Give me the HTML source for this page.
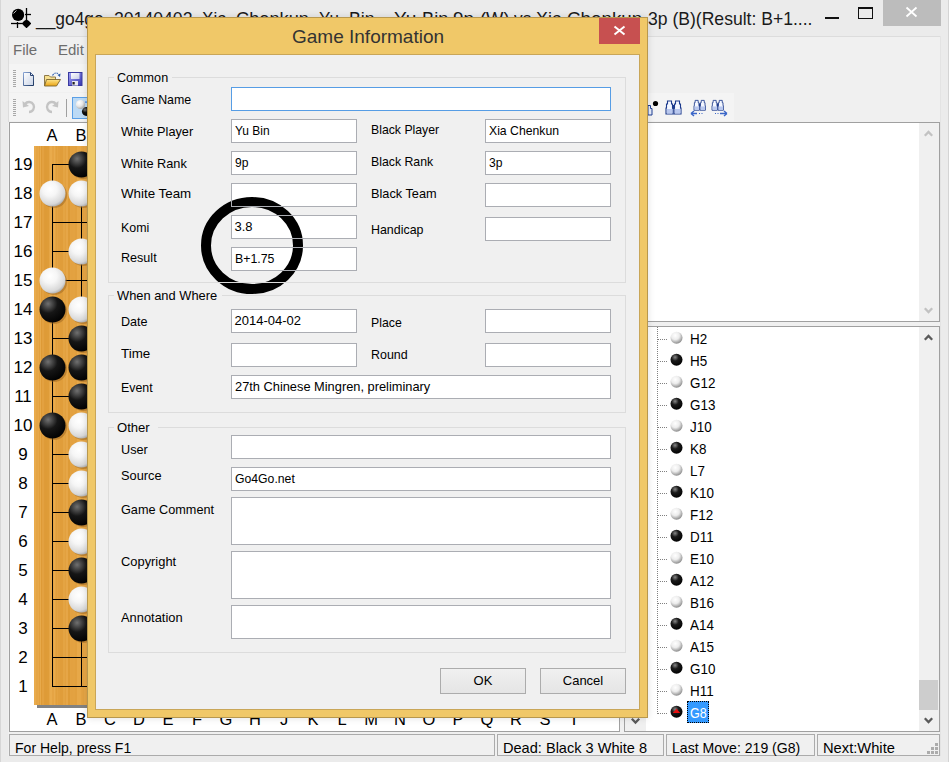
<!DOCTYPE html>
<html><head><meta charset="utf-8">
<style>
*{margin:0;padding:0;box-sizing:border-box}
html,body{width:949px;height:762px;overflow:hidden}
body{position:relative;background:#ebebeb;font-family:"Liberation Sans",sans-serif;color:#000}
.a{position:absolute}
.t{position:absolute;white-space:nowrap;line-height:1}
svg{position:absolute;overflow:visible}
</style></head><body>

<div class="a" style="left:0px;top:0px;width:1px;height:762px;background:#d6d6d6"></div>
<svg style="left:0;top:0" width="40" height="32">
<line x1="26.5" y1="8" x2="26.5" y2="28" stroke="#000" stroke-width="1.3"/>
<line x1="25" y1="14.5" x2="31" y2="14.5" stroke="#000" stroke-width="1.3"/>
<line x1="11" y1="23.5" x2="31" y2="23.5" stroke="#000" stroke-width="1.3"/>
<line x1="17.5" y1="22" x2="17.5" y2="28" stroke="#000" stroke-width="1.3"/>
<circle cx="18.1" cy="14.9" r="6.1" fill="#000"/>
<path d="M13.5 13.5 L16.5 10.5" stroke="#bbb" stroke-width="1"/>
<path d="M26.5 19.5 L29 21 L31 23.5 L29 26 L26.5 28 L24 26 L22 23.5 L24 21 Z" fill="#000"/>
</svg>
<div class="t" style="left:36.3px;top:8.92px;font-size:19px;color:#1a1a1a;transform-origin:0 0;transform:scaleX(0.9155)">__go4go_</div>
<div class="t" style="left:113.7px;top:8.92px;font-size:19px;color:#1a1a1a;transform-origin:0 0;transform:scaleX(0.9284)">20140402_</div>
<div class="t" style="left:202px;top:8.92px;font-size:19px;color:#1a1a1a;transform-origin:0 0;transform:scaleX(0.8993)">Xia_</div>
<div class="t" style="left:236.2px;top:8.92px;font-size:19px;color:#1a1a1a;transform-origin:0 0;transform:scaleX(0.9582)">Chenkun_</div>
<div class="t" style="left:319.2px;top:8.92px;font-size:19px;color:#1a1a1a;transform-origin:0 0;transform:scaleX(0.8973)">Yu_</div>
<div class="t" style="left:348.6px;top:8.92px;font-size:19px;color:#1a1a1a;transform-origin:0 0;transform:scaleX(0.9360)">Bin__</div>
<div class="t" style="left:394.1px;top:8.92px;font-size:19px;color:#1a1a1a;transform-origin:0 0;transform:scaleX(1.0078)">Yu&nbsp;</div>
<div class="t" style="left:421.8px;top:8.92px;font-size:19px;color:#1a1a1a;transform-origin:0 0;transform:scaleX(0.9588)">Bin&nbsp;</div>
<div class="t" style="left:453.2px;top:8.92px;font-size:19px;color:#1a1a1a;transform-origin:0 0;transform:scaleX(0.9954)">9p&nbsp;</div>
<div class="t" style="left:479.5px;top:8.92px;font-size:19px;color:#1a1a1a;transform-origin:0 0;transform:scaleX(0.9672)">(W)&nbsp;</div>
<div class="t" style="left:514.2px;top:8.92px;font-size:19px;color:#1a1a1a;transform-origin:0 0;transform:scaleX(0.9102)">vs&nbsp;</div>
<div class="t" style="left:536.3px;top:8.92px;font-size:19px;color:#1a1a1a;transform-origin:0 0;transform:scaleX(0.9405)">Xia&nbsp;</div>
<div class="t" style="left:567.1px;top:8.92px;font-size:19px;color:#1a1a1a;transform-origin:0 0;transform:scaleX(0.9884)">Chenkun&nbsp;</div>
<div class="t" style="left:647.5px;top:8.92px;font-size:19px;color:#1a1a1a;transform-origin:0 0;transform:scaleX(0.9245)">3p&nbsp;(B)(Result:&nbsp;B+1....</div>
<div class="a" style="left:825px;top:17px;width:14px;height:2px;background:#111"></div>
<div class="a" style="left:858px;top:7px;width:15px;height:12px;border:1px solid #111;border-top-width:2px"></div>
<div class="a" style="left:883px;top:0px;width:58px;height:26px;background:#bcbcbc"></div>
<div class="a" style="left:948px;top:0px;width:1px;height:762px;background:#d4d4d4"></div>
<svg style="left:906px;top:7px" width="11" height="10"><path d="M0.5 0.5 L10.5 9.5 M10.5 0.5 L0.5 9.5" stroke="#fff" stroke-width="1.8"/></svg>
<div class="a" style="left:8px;top:36px;width:933px;height:720px;background:#f0f0f0"></div>
<div class="a" style="left:8px;top:36px;width:933px;height:1px;background:#dcdcdc"></div>
<div class="a" style="left:8px;top:36px;width:1px;height:86px;background:#dcdcdc"></div>
<div class="a" style="left:940px;top:36px;width:1px;height:720px;background:#e3e3e3"></div>
<div class="a" style="left:9px;top:64px;width:630px;height:28px;background:#f4f4f4"></div>
<div class="a" style="left:9px;top:93px;width:725px;height:28px;background:#f4f4f4"></div>
<div class="t" style="left:13px;top:42.30px;font-size:15px;color:#6d6d6d;">File</div>
<div class="t" style="left:58px;top:42.30px;font-size:15px;color:#6d6d6d;">Edit</div>
<div class="a" style="left:13px;top:70px;width:3px;height:1px;background:#a8a8a8"></div>
<div class="a" style="left:13px;top:72px;width:3px;height:1px;background:#a8a8a8"></div>
<div class="a" style="left:13px;top:74px;width:3px;height:1px;background:#a8a8a8"></div>
<div class="a" style="left:13px;top:76px;width:3px;height:1px;background:#a8a8a8"></div>
<div class="a" style="left:13px;top:78px;width:3px;height:1px;background:#a8a8a8"></div>
<div class="a" style="left:13px;top:80px;width:3px;height:1px;background:#a8a8a8"></div>
<div class="a" style="left:13px;top:82px;width:3px;height:1px;background:#a8a8a8"></div>
<div class="a" style="left:13px;top:84px;width:3px;height:1px;background:#a8a8a8"></div>
<div class="a" style="left:13px;top:86px;width:3px;height:1px;background:#a8a8a8"></div>
<div class="a" style="left:13px;top:99px;width:3px;height:1px;background:#a8a8a8"></div>
<div class="a" style="left:13px;top:101px;width:3px;height:1px;background:#a8a8a8"></div>
<div class="a" style="left:13px;top:103px;width:3px;height:1px;background:#a8a8a8"></div>
<div class="a" style="left:13px;top:105px;width:3px;height:1px;background:#a8a8a8"></div>
<div class="a" style="left:13px;top:107px;width:3px;height:1px;background:#a8a8a8"></div>
<div class="a" style="left:13px;top:109px;width:3px;height:1px;background:#a8a8a8"></div>
<div class="a" style="left:13px;top:111px;width:3px;height:1px;background:#a8a8a8"></div>
<div class="a" style="left:13px;top:113px;width:3px;height:1px;background:#a8a8a8"></div>
<div class="a" style="left:13px;top:115px;width:3px;height:1px;background:#a8a8a8"></div>
<svg style="left:0;top:0" width="949" height="130">
<defs>
<linearGradient id="docg" x1="0" y1="0" x2="1" y2="1"><stop offset="0" stop-color="#fff"/><stop offset="1" stop-color="#c9d3e6"/></linearGradient>
<linearGradient id="foldg" x1="0" y1="0" x2="0" y2="1"><stop offset="0" stop-color="#fde48a"/><stop offset="1" stop-color="#eaa313"/></linearGradient>
<linearGradient id="flop" x1="0" y1="0" x2="1" y2="1"><stop offset="0" stop-color="#8f8ff0"/><stop offset="1" stop-color="#2f2fa8"/></linearGradient>
</defs>
<linearGradient id="docs" x1="0" y1="0" x2="1" y2="1"><stop offset="0" stop-color="#8aa6d6"/><stop offset="1" stop-color="#1b355f"/></linearGradient>
<path d="M23.5 72.5 H30.5 L33.5 75.5 V85.5 H23.5 Z" fill="url(#docg)" stroke="url(#docs)" stroke-width="1"/>
<path d="M30.5 72.5 V75.5 H33.5" fill="none" stroke="#27406e" stroke-width="1"/>
<path d="M44.5 75.5 H49 L50.5 77 H55.5 V85.5 H44.5 Z" fill="#f7e08e" stroke="#8f7a4a" stroke-width="1"/>
<path d="M46.5 79.5 H60.5 L56.5 86 H44.5 Z" fill="url(#foldg)" stroke="#7a6530" stroke-width="0.9"/>
<path d="M52.5 75.5 Q55.5 71 59 74.5" fill="none" stroke="#3060b0" stroke-width="1.1" stroke-dasharray="1.6 0.9"/>
<path d="M57.5 75 L60.5 73.5 L60 77 Z" fill="#2a5aa8"/>
<linearGradient id="flop2" x1="0" y1="0" x2="1" y2="1"><stop offset="0" stop-color="#a6a6f7"/><stop offset="1" stop-color="#3434b0"/></linearGradient>
<linearGradient id="lab" x1="0" y1="0" x2="1" y2="1"><stop offset="0" stop-color="#ffffff"/><stop offset="1" stop-color="#c8cde8"/></linearGradient>
<rect x="68.5" y="72.5" width="13.5" height="13" fill="url(#flop2)" stroke="#3a3aa0" stroke-width="1"/>
<rect x="71" y="73" width="8.5" height="6" fill="url(#lab)"/>
<rect x="72" y="81" width="6" height="4.5" fill="#e8e8f0"/>
<rect x="72.5" y="82" width="2.2" height="2.5" fill="#202020"/>
<path d="M25 104 A5 5 0 1 1 29 112" fill="none" stroke="#c4c4c4" stroke-width="2.4"/>
<path d="M22.5 101 L23 107.5 L29 106 Z" fill="#c4c4c4"/>
<path d="M56 104 A5 5 0 1 0 52 112" fill="none" stroke="#c4c4c4" stroke-width="2.4"/>
<path d="M58.5 101 L58 107.5 L52 106 Z" fill="#c4c4c4"/>
<rect x="66" y="99" width="1" height="18" fill="#a0a0a0"/>
<rect x="72.5" y="97.5" width="20" height="21" fill="#bcdaf5" stroke="#5a9fe6" stroke-width="1"/><rect x="85" y="101.5" width="3" height="1.2" fill="#3a7fe0"/>
<defs>
<radialGradient id="tgw" cx="0.35" cy="0.3" r="0.8"><stop offset="0" stop-color="#fff"/><stop offset="0.5" stop-color="#e8e8e8"/><stop offset="1" stop-color="#9a9a9a"/></radialGradient>
<radialGradient id="tgb" cx="0.35" cy="0.3" r="0.8"><stop offset="0" stop-color="#777"/><stop offset="0.4" stop-color="#111"/><stop offset="1" stop-color="#000"/></radialGradient>
</defs>
<circle cx="86.3" cy="111.5" r="4.4" fill="url(#tgb)"/>
<circle cx="80.5" cy="104.5" r="4.6" fill="url(#tgw)"/>
</svg>
<svg style="left:0;top:0" width="949" height="130"><g><path d="M648 105.5 H650.5 V108.5 H652 V115 H648 Z" fill="#e8eefc" stroke="#1f3f95" stroke-width="1"/><circle cx="655.5" cy="103.5" r="2.6" fill="#000"/></g><g transform="translate(666,100.5) scale(1.0)"><path d="M2.5 0.5 H5.5 V3.5 H6.5 V7.5 H7 V13.5 H0 V7.5 H0.5 V3.5 H1.5 V0.5 Z" fill="#f4f7ff" stroke="#1c3a8c" stroke-width="1.1"/><rect x="1" y="8.5" width="5.5" height="4.5" fill="#b9c8ef"/><path d="M10.5 0.5 H13.5 V3.5 H14.5 V7.5 H15 V13.5 H8 V7.5 H8.5 V3.5 H9.5 V0.5 Z" fill="#f4f7ff" stroke="#1c3a8c" stroke-width="1.1"/><rect x="9" y="8.5" width="5.5" height="4.5" fill="#b9c8ef"/><rect x="6.5" y="4.5" width="2" height="4" fill="#1c3a8c"/></g><g transform="translate(694,100) scale(0.76)"><path d="M2.5 0.5 H5.5 V3.5 H6.5 V7.5 H7 V13.5 H0 V7.5 H0.5 V3.5 H1.5 V0.5 Z" fill="#f4f7ff" stroke="#1c3a8c" stroke-width="1.1"/><rect x="1" y="8.5" width="5.5" height="4.5" fill="#b9c8ef"/><path d="M10.5 0.5 H13.5 V3.5 H14.5 V7.5 H15 V13.5 H8 V7.5 H8.5 V3.5 H9.5 V0.5 Z" fill="#f4f7ff" stroke="#1c3a8c" stroke-width="1.1"/><rect x="9" y="8.5" width="5.5" height="4.5" fill="#b9c8ef"/><rect x="6.5" y="4.5" width="2" height="4" fill="#1c3a8c"/></g><g transform="translate(712,100) scale(0.76)"><path d="M2.5 0.5 H5.5 V3.5 H6.5 V7.5 H7 V13.5 H0 V7.5 H0.5 V3.5 H1.5 V0.5 Z" fill="#f4f7ff" stroke="#1c3a8c" stroke-width="1.1"/><rect x="1" y="8.5" width="5.5" height="4.5" fill="#b9c8ef"/><path d="M10.5 0.5 H13.5 V3.5 H14.5 V7.5 H15 V13.5 H8 V7.5 H8.5 V3.5 H9.5 V0.5 Z" fill="#f4f7ff" stroke="#1c3a8c" stroke-width="1.1"/><rect x="9" y="8.5" width="5.5" height="4.5" fill="#b9c8ef"/><rect x="6.5" y="4.5" width="2" height="4" fill="#1c3a8c"/></g><path d="M691 113.5 H697 M691 113.5 L694 111 M691 113.5 L694 116" stroke="#3a66c8" stroke-width="1.4" fill="none"/><path d="M699 113.5 h1 M701.5 113.5 h1" stroke="#3a66c8" stroke-width="1"/><path d="M720 113.5 H727 M727 113.5 L724 111 M727 113.5 L724 116" stroke="#3a66c8" stroke-width="1.4" fill="none"/><path d="M715 113.5 h1 M717.5 113.5 h1" stroke="#3a66c8" stroke-width="1"/></svg>
<div class="a" style="left:9px;top:122px;width:611px;height:610px;background:#fff;border:1px solid #a0a0a0"></div>
<div class="a" style="left:37px;top:147px;width:558px;height:561px;background:#828282"></div>
<div class="a" style="left:34px;top:146px;width:558px;height:559px;background:linear-gradient(90deg,rgb(233,171,76) 0px 2px,rgb(229,165,69) 2px 4px,rgb(231,168,73) 4px 5px,rgb(226,160,62) 5px 6px,rgb(232,170,75) 6px 7px,rgb(222,154,54) 7px 8px,rgb(227,161,64) 8px 10px,rgb(223,155,56) 10px 11px,rgb(222,155,55) 11px 13px,rgb(223,156,56) 13px 15px,rgb(229,165,69) 15px 16px,rgb(233,171,76) 16px 18px,rgb(229,164,68) 18px 20px,rgb(233,171,77) 20px 21px,rgb(228,164,67) 21px 22px,rgb(225,159,60) 22px 23px,rgb(228,163,66) 23px 24px,rgb(225,159,61) 24px 26px,rgb(224,157,58) 26px 29px,rgb(228,164,67) 29px 31px,rgb(226,160,62) 31px 32px,rgb(230,166,71) 32px 34px,rgb(222,155,55) 34px 36px,rgb(227,162,65) 36px 37px,rgb(227,161,64) 37px 39px,rgb(227,162,65) 39px 41px,rgb(226,160,62) 41px 43px,rgb(231,168,73) 43px 44px,rgb(231,168,72) 44px 47px,rgb(228,164,67) 47px 48px,rgb(227,162,65) 48px 50px,rgb(230,167,71) 50px 52px,rgb(229,164,68) 52px 54px,rgb(223,156,56) 54px 55px,rgb(223,156,57) 55px 57px,rgb(223,156,57) 57px 59px,rgb(227,161,64) 59px 61px,rgb(222,155,55) 61px 64px,rgb(228,164,67) 64px 66px,rgb(226,160,62) 66px 68px,rgb(229,164,68) 68px 70px,rgb(231,168,73) 70px 72px,rgb(232,169,74) 72px 73px,rgb(227,162,65) 73px 75px,rgb(222,155,55) 75px 78px,rgb(230,166,70) 78px 81px,rgb(228,164,67) 81px 84px,rgb(231,168,73) 84px 87px,rgb(230,166,71) 87px 89px,rgb(226,160,62) 89px 92px,rgb(226,160,62) 92px 94px,rgb(223,156,56) 94px 96px,rgb(224,157,59) 96px 97px,rgb(223,156,57) 97px 99px,rgb(226,161,63) 99px 100px,rgb(222,155,55) 100px 102px,rgb(226,161,63) 102px 104px,rgb(232,169,75) 104px 106px,rgb(232,169,74) 106px 108px,rgb(230,166,70) 108px 110px,rgb(230,166,70) 110px 112px,rgb(233,171,76) 112px 114px,rgb(222,155,55) 114px 115px,rgb(224,158,59) 115px 116px,rgb(222,154,54) 116px 117px,rgb(224,157,58) 117px 119px,rgb(222,154,54) 119px 121px,rgb(228,163,66) 121px 123px,rgb(228,164,67) 123px 125px,rgb(230,166,70) 125px 126px,rgb(233,171,76) 126px 128px,rgb(230,166,70) 128px 131px,rgb(227,162,64) 131px 132px,rgb(231,168,73) 132px 135px,rgb(226,161,63) 135px 137px,rgb(223,155,56) 137px 139px,rgb(226,161,63) 139px 142px,rgb(222,155,55) 142px 143px,rgb(227,161,64) 143px 144px,rgb(226,160,62) 144px 145px,rgb(223,155,56) 145px 146px,rgb(223,156,57) 146px 148px,rgb(233,171,76) 148px 149px,rgb(222,154,54) 149px 151px,rgb(229,165,68) 151px 152px,rgb(229,165,69) 152px 153px,rgb(229,164,68) 153px 155px,rgb(223,156,56) 155px 157px,rgb(233,171,77) 157px 159px,rgb(227,162,65) 159px 161px,rgb(223,155,56) 161px 163px,rgb(230,167,71) 163px 164px,rgb(225,158,60) 164px 167px,rgb(223,156,57) 167px 170px,rgb(224,157,58) 170px 171px,rgb(226,160,62) 171px 173px,rgb(228,163,67) 173px 176px,rgb(231,167,72) 176px 177px,rgb(233,171,77) 177px 179px,rgb(230,166,70) 179px 180px,rgb(228,163,66) 180px 182px,rgb(226,160,62) 182px 183px,rgb(228,163,66) 183px 184px,rgb(225,159,61) 184px 186px,rgb(229,165,68) 186px 187px,rgb(231,168,73) 187px 188px,rgb(230,167,71) 188px 190px,rgb(224,157,58) 190px 191px,rgb(226,160,62) 191px 193px,rgb(233,171,77) 193px 194px,rgb(227,162,65) 194px 196px,rgb(230,166,70) 196px 197px,rgb(227,162,64) 197px 199px,rgb(233,171,77) 199px 202px,rgb(222,155,55) 202px 204px,rgb(224,158,59) 204px 205px,rgb(226,160,62) 205px 206px,rgb(229,165,68) 206px 208px,rgb(232,169,74) 208px 210px,rgb(232,170,75) 210px 212px,rgb(231,168,73) 212px 214px,rgb(232,169,74) 214px 215px,rgb(232,170,75) 215px 216px,rgb(231,167,72) 216px 219px,rgb(232,170,75) 219px 221px,rgb(231,168,72) 221px 223px,rgb(223,155,56) 223px 225px,rgb(226,161,63) 225px 228px,rgb(230,167,71) 228px 230px,rgb(230,167,71) 230px 231px,rgb(233,171,77) 231px 232px,rgb(223,156,57) 232px 233px,rgb(231,168,73) 233px 235px,rgb(229,165,68) 235px 236px,rgb(233,171,77) 236px 238px,rgb(233,170,76) 238px 241px,rgb(228,163,67) 241px 242px,rgb(222,154,54) 242px 243px,rgb(229,165,69) 243px 246px,rgb(230,167,71) 246px 248px,rgb(227,161,64) 248px 249px,rgb(231,168,73) 249px 250px,rgb(222,154,54) 250px 251px,rgb(225,159,61) 251px 252px,rgb(231,167,72) 252px 253px,rgb(225,158,60) 253px 255px,rgb(232,169,74) 255px 257px,rgb(232,170,75) 257px 258px,rgb(232,170,75) 258px 260px,rgb(229,164,68) 260px 263px,rgb(227,161,64) 263px 265px,rgb(223,156,57) 265px 267px,rgb(228,163,66) 267px 268px,rgb(232,169,74) 268px 269px,rgb(229,164,68) 269px 270px,rgb(224,157,58) 270px 271px,rgb(229,165,68) 271px 273px,rgb(228,164,67) 273px 274px,rgb(230,166,70) 274px 276px,rgb(228,163,67) 276px 278px,rgb(232,169,75) 278px 279px,rgb(224,158,59) 279px 280px,rgb(222,154,55) 280px 282px,rgb(228,163,66) 282px 283px,rgb(222,154,54) 283px 285px,rgb(227,161,64) 285px 286px,rgb(233,171,77) 286px 288px,rgb(228,163,66) 288px 290px,rgb(225,158,60) 290px 293px,rgb(228,163,66) 293px 295px,rgb(228,163,66) 295px 297px,rgb(230,166,70) 297px 298px,rgb(233,170,76) 298px 300px,rgb(232,169,74) 300px 301px,rgb(226,161,63) 301px 302px,rgb(227,161,64) 302px 304px,rgb(230,166,70) 304px 305px,rgb(222,155,55) 305px 307px,rgb(225,159,61) 307px 310px,rgb(232,170,75) 310px 311px,rgb(233,170,76) 311px 312px,rgb(229,165,69) 312px 315px,rgb(225,158,60) 315px 316px,rgb(233,171,77) 316px 317px,rgb(230,167,71) 317px 318px,rgb(226,161,63) 318px 319px,rgb(223,156,57) 319px 321px,rgb(231,168,73) 321px 324px,rgb(230,166,70) 324px 325px,rgb(226,161,63) 325px 327px,rgb(224,157,58) 327px 329px,rgb(223,155,56) 329px 331px,rgb(222,154,54) 331px 333px,rgb(227,162,65) 333px 335px,rgb(222,154,54) 335px 338px,rgb(228,163,66) 338px 340px,rgb(228,163,66) 340px 342px,rgb(223,156,56) 342px 343px,rgb(233,171,77) 343px 344px,rgb(223,155,56) 344px 345px,rgb(222,154,54) 345px 347px,rgb(225,158,60) 347px 348px,rgb(231,168,73) 348px 349px,rgb(231,168,73) 349px 352px,rgb(226,161,63) 352px 354px,rgb(233,170,76) 354px 356px,rgb(227,162,65) 356px 358px,rgb(223,155,56) 358px 360px,rgb(231,168,73) 360px 361px,rgb(227,161,64) 361px 362px,rgb(225,158,60) 362px 363px,rgb(229,165,69) 363px 364px,rgb(223,155,56) 364px 366px,rgb(222,155,55) 366px 367px,rgb(227,162,64) 367px 368px,rgb(233,171,77) 368px 370px,rgb(233,170,76) 370px 372px,rgb(229,165,68) 372px 374px,rgb(228,163,66) 374px 375px,rgb(233,170,76) 375px 376px,rgb(225,158,60) 376px 377px,rgb(224,157,58) 377px 378px,rgb(229,165,69) 378px 380px,rgb(231,167,72) 380px 382px,rgb(227,162,64) 382px 384px,rgb(224,157,58) 384px 387px,rgb(231,168,73) 387px 389px,rgb(222,154,54) 389px 391px,rgb(230,167,71) 391px 392px,rgb(233,171,77) 392px 394px,rgb(227,162,65) 394px 396px,rgb(223,155,56) 396px 398px,rgb(227,161,64) 398px 401px,rgb(228,163,67) 401px 403px,rgb(233,171,77) 403px 405px,rgb(230,166,70) 405px 407px,rgb(226,160,62) 407px 408px,rgb(230,167,71) 408px 411px,rgb(226,161,63) 411px 412px,rgb(233,171,77) 412px 414px,rgb(222,154,54) 414px 415px,rgb(230,167,71) 415px 418px,rgb(227,161,64) 418px 420px,rgb(223,155,56) 420px 421px,rgb(232,169,74) 421px 423px,rgb(233,171,77) 423px 426px,rgb(224,158,59) 426px 428px,rgb(222,154,55) 428px 430px,rgb(223,156,57) 430px 431px,rgb(222,154,54) 431px 433px,rgb(233,171,77) 433px 435px,rgb(225,159,61) 435px 437px,rgb(233,171,77) 437px 438px,rgb(224,157,59) 438px 440px,rgb(222,154,54) 440px 441px,rgb(223,155,56) 441px 443px,rgb(228,163,66) 443px 445px,rgb(224,158,59) 445px 446px,rgb(223,155,56) 446px 447px,rgb(223,156,57) 447px 448px,rgb(222,154,55) 448px 450px,rgb(225,159,61) 450px 451px,rgb(224,158,59) 451px 454px,rgb(233,171,76) 454px 456px,rgb(229,165,69) 456px 457px,rgb(231,168,72) 457px 460px,rgb(226,161,63) 460px 462px,rgb(230,166,71) 462px 464px,rgb(223,156,57) 464px 466px,rgb(229,165,68) 466px 469px,rgb(222,154,55) 469px 470px,rgb(232,170,75) 470px 473px,rgb(227,161,64) 473px 476px,rgb(231,168,73) 476px 479px,rgb(232,170,75) 479px 480px,rgb(228,164,67) 480px 482px,rgb(231,168,73) 482px 483px,rgb(231,168,73) 483px 485px,rgb(230,166,70) 485px 488px,rgb(229,165,69) 488px 491px,rgb(222,154,54) 491px 492px,rgb(229,165,69) 492px 493px,rgb(226,160,63) 493px 494px,rgb(228,164,67) 494px 496px,rgb(222,154,54) 496px 499px,rgb(230,166,70) 499px 501px,rgb(225,158,60) 501px 503px,rgb(231,168,73) 503px 505px,rgb(233,170,76) 505px 508px,rgb(223,155,56) 508px 510px,rgb(222,155,55) 510px 512px,rgb(227,162,65) 512px 515px,rgb(232,169,74) 515px 516px,rgb(230,167,71) 516px 517px,rgb(224,158,59) 517px 518px,rgb(233,171,77) 518px 521px,rgb(232,169,74) 521px 523px,rgb(227,162,65) 523px 524px,rgb(225,159,60) 524px 527px,rgb(229,165,68) 527px 528px,rgb(224,157,58) 528px 531px,rgb(223,156,57) 531px 533px,rgb(229,165,69) 533px 535px,rgb(225,159,61) 535px 538px,rgb(223,156,57) 538px 540px,rgb(222,155,55) 540px 542px,rgb(233,171,77) 542px 544px,rgb(230,166,70) 544px 545px,rgb(227,162,65) 545px 548px,rgb(228,163,66) 548px 551px,rgb(227,162,65) 551px 553px,rgb(233,171,77) 553px 554px,rgb(224,157,58) 554px 556px,rgb(233,170,76) 556px 557px,rgb(225,159,60) 557px 558px,rgb(231,168,73) 558px 559px,rgb(233,171,77) 559px 561px)"></div>
<svg style="left:0;top:0" width="949" height="762"><defs><radialGradient id="gb" cx="0.33" cy="0.28" r="0.8"><stop offset="0" stop-color="#707070"/><stop offset="0.45" stop-color="#161616"/><stop offset="1" stop-color="#000"/></radialGradient><radialGradient id="gw" cx="0.4" cy="0.33" r="0.78"><stop offset="0" stop-color="#ffffff"/><stop offset="0.35" stop-color="#f6f6f6"/><stop offset="0.75" stop-color="#d8d8d8"/><stop offset="1" stop-color="#8e8e8e"/></radialGradient></defs><path d="M52.5 164 V194 M52 164.5 H82 M52.5 193 V223 M81 164.5 H111 M52.5 222 V252 M110 164.5 H140 M52.5 251 V281 M139 164.5 H169 M168 164.5 H198 M52.5 309 V339 M197 164.5 H227 M52.5 338 V368 M226 164.5 H256 M52.5 367 V397 M255 164.5 H285 M52.5 396 V426 M284 164.5 H314 M52.5 425 V455 M313 164.5 H343 M52.5 454 V484 M342 164.5 H372 M52.5 483 V513 M371 164.5 H401 M52.5 512 V542 M400 164.5 H430 M52.5 541 V571 M429 164.5 H459 M52.5 570 V600 M458 164.5 H488 M52.5 599 V629 M487 164.5 H517 M52.5 628 V658 M516 164.5 H546 M52.5 657 V687 M545 164.5 H575 M81.5 193 V223 M81 193.5 H111 M81.5 222 V252 M110 193.5 H140 M81.5 251 V281 M139 193.5 H169 M81.5 280 V310 M168 193.5 H198 M197 193.5 H227 M226 193.5 H256 M255 193.5 H285 M284 193.5 H314 M313 193.5 H343 M342 193.5 H372 M371 193.5 H401 M400 193.5 H430 M429 193.5 H459 M458 193.5 H488 M487 193.5 H517 M81.5 628 V658 M516 193.5 H546 M81.5 657 V687 M545 193.5 H575 M110.5 164 V194 M52 222.5 H82 M110.5 193 V223 M81 222.5 H111 M110.5 222 V252 M110 222.5 H140 M110.5 251 V281 M139 222.5 H169 M110.5 280 V310 M168 222.5 H198 M110.5 309 V339 M197 222.5 H227 M110.5 338 V368 M226 222.5 H256 M110.5 367 V397 M255 222.5 H285 M110.5 396 V426 M284 222.5 H314 M110.5 425 V455 M313 222.5 H343 M110.5 454 V484 M342 222.5 H372 M110.5 483 V513 M371 222.5 H401 M110.5 512 V542 M400 222.5 H430 M110.5 541 V571 M429 222.5 H459 M110.5 570 V600 M458 222.5 H488 M110.5 599 V629 M487 222.5 H517 M110.5 628 V658 M516 222.5 H546 M110.5 657 V687 M545 222.5 H575 M139.5 164 V194 M52 251.5 H82 M139.5 193 V223 M81 251.5 H111 M139.5 222 V252 M110 251.5 H140 M139.5 251 V281 M139 251.5 H169 M139.5 280 V310 M168 251.5 H198 M139.5 309 V339 M197 251.5 H227 M139.5 338 V368 M226 251.5 H256 M139.5 367 V397 M255 251.5 H285 M139.5 396 V426 M284 251.5 H314 M139.5 425 V455 M313 251.5 H343 M139.5 454 V484 M342 251.5 H372 M139.5 483 V513 M371 251.5 H401 M139.5 512 V542 M400 251.5 H430 M139.5 541 V571 M429 251.5 H459 M139.5 570 V600 M458 251.5 H488 M139.5 599 V629 M487 251.5 H517 M139.5 628 V658 M516 251.5 H546 M139.5 657 V687 M545 251.5 H575 M168.5 164 V194 M52 280.5 H82 M168.5 193 V223 M81 280.5 H111 M168.5 222 V252 M110 280.5 H140 M168.5 251 V281 M139 280.5 H169 M168.5 280 V310 M168 280.5 H198 M168.5 309 V339 M197 280.5 H227 M168.5 338 V368 M226 280.5 H256 M168.5 367 V397 M255 280.5 H285 M168.5 396 V426 M284 280.5 H314 M168.5 425 V455 M313 280.5 H343 M168.5 454 V484 M342 280.5 H372 M168.5 483 V513 M371 280.5 H401 M168.5 512 V542 M400 280.5 H430 M168.5 541 V571 M429 280.5 H459 M168.5 570 V600 M458 280.5 H488 M168.5 599 V629 M487 280.5 H517 M168.5 628 V658 M516 280.5 H546 M168.5 657 V687 M545 280.5 H575 M197.5 164 V194 M197.5 193 V223 M81 309.5 H111 M197.5 222 V252 M110 309.5 H140 M197.5 251 V281 M139 309.5 H169 M197.5 280 V310 M168 309.5 H198 M197.5 309 V339 M197 309.5 H227 M197.5 338 V368 M226 309.5 H256 M197.5 367 V397 M255 309.5 H285 M197.5 396 V426 M284 309.5 H314 M197.5 425 V455 M313 309.5 H343 M197.5 454 V484 M342 309.5 H372 M197.5 483 V513 M371 309.5 H401 M197.5 512 V542 M400 309.5 H430 M197.5 541 V571 M429 309.5 H459 M197.5 570 V600 M458 309.5 H488 M197.5 599 V629 M487 309.5 H517 M197.5 628 V658 M516 309.5 H546 M197.5 657 V687 M545 309.5 H575 M226.5 164 V194 M52 338.5 H82 M226.5 193 V223 M81 338.5 H111 M226.5 222 V252 M110 338.5 H140 M226.5 251 V281 M139 338.5 H169 M226.5 280 V310 M168 338.5 H198 M226.5 309 V339 M197 338.5 H227 M226.5 338 V368 M226 338.5 H256 M226.5 367 V397 M255 338.5 H285 M226.5 396 V426 M284 338.5 H314 M226.5 425 V455 M313 338.5 H343 M226.5 454 V484 M342 338.5 H372 M226.5 483 V513 M371 338.5 H401 M226.5 512 V542 M400 338.5 H430 M226.5 541 V571 M429 338.5 H459 M226.5 570 V600 M458 338.5 H488 M226.5 599 V629 M487 338.5 H517 M226.5 628 V658 M516 338.5 H546 M226.5 657 V687 M545 338.5 H575 M255.5 164 V194 M255.5 193 V223 M81 367.5 H111 M255.5 222 V252 M110 367.5 H140 M255.5 251 V281 M139 367.5 H169 M255.5 280 V310 M168 367.5 H198 M255.5 309 V339 M197 367.5 H227 M255.5 338 V368 M226 367.5 H256 M255.5 367 V397 M255 367.5 H285 M255.5 396 V426 M284 367.5 H314 M255.5 425 V455 M313 367.5 H343 M255.5 454 V484 M342 367.5 H372 M255.5 483 V513 M371 367.5 H401 M255.5 512 V542 M400 367.5 H430 M255.5 541 V571 M429 367.5 H459 M255.5 570 V600 M458 367.5 H488 M255.5 599 V629 M487 367.5 H517 M255.5 628 V658 M516 367.5 H546 M255.5 657 V687 M545 367.5 H575 M284.5 164 V194 M52 396.5 H82 M284.5 193 V223 M81 396.5 H111 M284.5 222 V252 M110 396.5 H140 M284.5 251 V281 M139 396.5 H169 M284.5 280 V310 M168 396.5 H198 M284.5 309 V339 M197 396.5 H227 M284.5 338 V368 M226 396.5 H256 M284.5 367 V397 M255 396.5 H285 M284.5 396 V426 M284 396.5 H314 M284.5 425 V455 M313 396.5 H343 M284.5 454 V484 M342 396.5 H372 M284.5 483 V513 M371 396.5 H401 M284.5 512 V542 M400 396.5 H430 M284.5 541 V571 M429 396.5 H459 M284.5 570 V600 M458 396.5 H488 M284.5 599 V629 M487 396.5 H517 M284.5 628 V658 M516 396.5 H546 M284.5 657 V687 M545 396.5 H575 M313.5 164 V194 M313.5 193 V223 M81 425.5 H111 M313.5 222 V252 M110 425.5 H140 M313.5 251 V281 M139 425.5 H169 M313.5 280 V310 M168 425.5 H198 M313.5 309 V339 M197 425.5 H227 M313.5 338 V368 M226 425.5 H256 M313.5 367 V397 M255 425.5 H285 M313.5 396 V426 M284 425.5 H314 M313.5 425 V455 M313 425.5 H343 M313.5 454 V484 M342 425.5 H372 M313.5 483 V513 M371 425.5 H401 M313.5 512 V542 M400 425.5 H430 M313.5 541 V571 M429 425.5 H459 M313.5 570 V600 M458 425.5 H488 M313.5 599 V629 M487 425.5 H517 M313.5 628 V658 M516 425.5 H546 M313.5 657 V687 M545 425.5 H575 M342.5 164 V194 M52 454.5 H82 M342.5 193 V223 M81 454.5 H111 M342.5 222 V252 M110 454.5 H140 M342.5 251 V281 M139 454.5 H169 M342.5 280 V310 M168 454.5 H198 M342.5 309 V339 M197 454.5 H227 M342.5 338 V368 M226 454.5 H256 M342.5 367 V397 M255 454.5 H285 M342.5 396 V426 M284 454.5 H314 M342.5 425 V455 M313 454.5 H343 M342.5 454 V484 M342 454.5 H372 M342.5 483 V513 M371 454.5 H401 M342.5 512 V542 M400 454.5 H430 M342.5 541 V571 M429 454.5 H459 M342.5 570 V600 M458 454.5 H488 M342.5 599 V629 M487 454.5 H517 M342.5 628 V658 M516 454.5 H546 M342.5 657 V687 M545 454.5 H575 M371.5 164 V194 M52 483.5 H82 M371.5 193 V223 M81 483.5 H111 M371.5 222 V252 M110 483.5 H140 M371.5 251 V281 M139 483.5 H169 M371.5 280 V310 M168 483.5 H198 M371.5 309 V339 M197 483.5 H227 M371.5 338 V368 M226 483.5 H256 M371.5 367 V397 M255 483.5 H285 M371.5 396 V426 M284 483.5 H314 M371.5 425 V455 M313 483.5 H343 M371.5 454 V484 M342 483.5 H372 M371.5 483 V513 M371 483.5 H401 M371.5 512 V542 M400 483.5 H430 M371.5 541 V571 M429 483.5 H459 M371.5 570 V600 M458 483.5 H488 M371.5 599 V629 M487 483.5 H517 M371.5 628 V658 M516 483.5 H546 M371.5 657 V687 M545 483.5 H575 M400.5 164 V194 M52 512.5 H82 M400.5 193 V223 M81 512.5 H111 M400.5 222 V252 M110 512.5 H140 M400.5 251 V281 M139 512.5 H169 M400.5 280 V310 M168 512.5 H198 M400.5 309 V339 M197 512.5 H227 M400.5 338 V368 M226 512.5 H256 M400.5 367 V397 M255 512.5 H285 M400.5 396 V426 M284 512.5 H314 M400.5 425 V455 M313 512.5 H343 M400.5 454 V484 M342 512.5 H372 M400.5 483 V513 M371 512.5 H401 M400.5 512 V542 M400 512.5 H430 M400.5 541 V571 M429 512.5 H459 M400.5 570 V600 M458 512.5 H488 M400.5 599 V629 M487 512.5 H517 M400.5 628 V658 M516 512.5 H546 M400.5 657 V687 M545 512.5 H575 M429.5 164 V194 M52 541.5 H82 M429.5 193 V223 M81 541.5 H111 M429.5 222 V252 M110 541.5 H140 M429.5 251 V281 M139 541.5 H169 M429.5 280 V310 M168 541.5 H198 M429.5 309 V339 M197 541.5 H227 M429.5 338 V368 M226 541.5 H256 M429.5 367 V397 M255 541.5 H285 M429.5 396 V426 M284 541.5 H314 M429.5 425 V455 M313 541.5 H343 M429.5 454 V484 M342 541.5 H372 M429.5 483 V513 M371 541.5 H401 M429.5 512 V542 M400 541.5 H430 M429.5 541 V571 M429 541.5 H459 M429.5 570 V600 M458 541.5 H488 M429.5 599 V629 M487 541.5 H517 M429.5 628 V658 M516 541.5 H546 M429.5 657 V687 M545 541.5 H575 M458.5 164 V194 M52 570.5 H82 M458.5 193 V223 M81 570.5 H111 M458.5 222 V252 M110 570.5 H140 M458.5 251 V281 M139 570.5 H169 M458.5 280 V310 M168 570.5 H198 M458.5 309 V339 M197 570.5 H227 M458.5 338 V368 M226 570.5 H256 M458.5 367 V397 M255 570.5 H285 M458.5 396 V426 M284 570.5 H314 M458.5 425 V455 M313 570.5 H343 M458.5 454 V484 M342 570.5 H372 M458.5 483 V513 M371 570.5 H401 M458.5 512 V542 M400 570.5 H430 M458.5 541 V571 M429 570.5 H459 M458.5 570 V600 M458 570.5 H488 M458.5 599 V629 M487 570.5 H517 M458.5 628 V658 M516 570.5 H546 M458.5 657 V687 M545 570.5 H575 M487.5 164 V194 M52 599.5 H82 M487.5 193 V223 M81 599.5 H111 M487.5 222 V252 M110 599.5 H140 M487.5 251 V281 M139 599.5 H169 M487.5 280 V310 M168 599.5 H198 M487.5 309 V339 M197 599.5 H227 M487.5 338 V368 M226 599.5 H256 M487.5 367 V397 M255 599.5 H285 M487.5 396 V426 M284 599.5 H314 M487.5 425 V455 M313 599.5 H343 M487.5 454 V484 M342 599.5 H372 M487.5 483 V513 M371 599.5 H401 M487.5 512 V542 M400 599.5 H430 M487.5 541 V571 M429 599.5 H459 M487.5 570 V600 M458 599.5 H488 M487.5 599 V629 M487 599.5 H517 M487.5 628 V658 M516 599.5 H546 M487.5 657 V687 M545 599.5 H575 M516.5 164 V194 M52 628.5 H82 M516.5 193 V223 M81 628.5 H111 M516.5 222 V252 M110 628.5 H140 M516.5 251 V281 M139 628.5 H169 M516.5 280 V310 M168 628.5 H198 M516.5 309 V339 M197 628.5 H227 M516.5 338 V368 M226 628.5 H256 M516.5 367 V397 M255 628.5 H285 M516.5 396 V426 M284 628.5 H314 M516.5 425 V455 M313 628.5 H343 M516.5 454 V484 M342 628.5 H372 M516.5 483 V513 M371 628.5 H401 M516.5 512 V542 M400 628.5 H430 M516.5 541 V571 M429 628.5 H459 M516.5 570 V600 M458 628.5 H488 M516.5 599 V629 M487 628.5 H517 M516.5 628 V658 M516 628.5 H546 M516.5 657 V687 M545 628.5 H575 M545.5 164 V194 M52 657.5 H82 M545.5 193 V223 M81 657.5 H111 M545.5 222 V252 M110 657.5 H140 M545.5 251 V281 M139 657.5 H169 M545.5 280 V310 M168 657.5 H198 M545.5 309 V339 M197 657.5 H227 M545.5 338 V368 M226 657.5 H256 M545.5 367 V397 M255 657.5 H285 M545.5 396 V426 M284 657.5 H314 M545.5 425 V455 M313 657.5 H343 M545.5 454 V484 M342 657.5 H372 M545.5 483 V513 M371 657.5 H401 M545.5 512 V542 M400 657.5 H430 M545.5 541 V571 M429 657.5 H459 M545.5 570 V600 M458 657.5 H488 M545.5 599 V629 M487 657.5 H517 M545.5 628 V658 M516 657.5 H546 M545.5 657 V687 M545 657.5 H575 M574.5 164 V194 M52 686.5 H82 M574.5 193 V223 M81 686.5 H111 M574.5 222 V252 M110 686.5 H140 M574.5 251 V281 M139 686.5 H169 M574.5 280 V310 M168 686.5 H198 M574.5 309 V339 M197 686.5 H227 M574.5 338 V368 M226 686.5 H256 M574.5 367 V397 M255 686.5 H285 M574.5 396 V426 M284 686.5 H314 M574.5 425 V455 M313 686.5 H343 M574.5 454 V484 M342 686.5 H372 M574.5 483 V513 M371 686.5 H401 M574.5 512 V542 M400 686.5 H430 M574.5 541 V571 M429 686.5 H459 M574.5 570 V600 M458 686.5 H488 M574.5 599 V629 M487 686.5 H517 M574.5 628 V658 M516 686.5 H546 M574.5 657 V687 M545 686.5 H575" stroke="#000" stroke-width="1" fill="none"/><circle cx="54.1" cy="195.1" r="13" fill="#9a6420" opacity="0.5"/><circle cx="52.5" cy="193.5" r="13" fill="url(#gw)"/><circle cx="54.1" cy="282.1" r="13" fill="#9a6420" opacity="0.5"/><circle cx="52.5" cy="280.5" r="13" fill="url(#gw)"/><circle cx="54.1" cy="311.1" r="13" fill="#9a6420" opacity="0.5"/><circle cx="52.5" cy="309.5" r="13" fill="url(#gb)"/><circle cx="54.1" cy="369.1" r="13" fill="#9a6420" opacity="0.5"/><circle cx="52.5" cy="367.5" r="13" fill="url(#gb)"/><circle cx="54.1" cy="427.1" r="13" fill="#9a6420" opacity="0.5"/><circle cx="52.5" cy="425.5" r="13" fill="url(#gb)"/><circle cx="83.1" cy="166.1" r="13" fill="#9a6420" opacity="0.5"/><circle cx="81.5" cy="164.5" r="13" fill="url(#gb)"/><circle cx="83.1" cy="195.1" r="13" fill="#9a6420" opacity="0.5"/><circle cx="81.5" cy="193.5" r="13" fill="url(#gw)"/><circle cx="83.1" cy="253.1" r="13" fill="#9a6420" opacity="0.5"/><circle cx="81.5" cy="251.5" r="13" fill="url(#gw)"/><circle cx="83.1" cy="311.1" r="13" fill="#9a6420" opacity="0.5"/><circle cx="81.5" cy="309.5" r="13" fill="url(#gw)"/><circle cx="83.1" cy="340.1" r="13" fill="#9a6420" opacity="0.5"/><circle cx="81.5" cy="338.5" r="13" fill="url(#gb)"/><circle cx="83.1" cy="369.1" r="13" fill="#9a6420" opacity="0.5"/><circle cx="81.5" cy="367.5" r="13" fill="url(#gb)"/><circle cx="83.1" cy="398.1" r="13" fill="#9a6420" opacity="0.5"/><circle cx="81.5" cy="396.5" r="13" fill="url(#gb)"/><circle cx="83.1" cy="427.1" r="13" fill="#9a6420" opacity="0.5"/><circle cx="81.5" cy="425.5" r="13" fill="url(#gw)"/><circle cx="83.1" cy="456.1" r="13" fill="#9a6420" opacity="0.5"/><circle cx="81.5" cy="454.5" r="13" fill="url(#gw)"/><circle cx="83.1" cy="485.1" r="13" fill="#9a6420" opacity="0.5"/><circle cx="81.5" cy="483.5" r="13" fill="url(#gw)"/><circle cx="83.1" cy="514.1" r="13" fill="#9a6420" opacity="0.5"/><circle cx="81.5" cy="512.5" r="13" fill="url(#gb)"/><circle cx="83.1" cy="543.1" r="13" fill="#9a6420" opacity="0.5"/><circle cx="81.5" cy="541.5" r="13" fill="url(#gw)"/><circle cx="83.1" cy="572.1" r="13" fill="#9a6420" opacity="0.5"/><circle cx="81.5" cy="570.5" r="13" fill="url(#gb)"/><circle cx="83.1" cy="601.1" r="13" fill="#9a6420" opacity="0.5"/><circle cx="81.5" cy="599.5" r="13" fill="url(#gw)"/><circle cx="83.1" cy="630.1" r="13" fill="#9a6420" opacity="0.5"/><circle cx="81.5" cy="628.5" r="13" fill="url(#gb)"/></svg>
<div class="t" style="left:42px;top:127.0px;width:20px;text-align:center;font-size:16.5px">A</div>
<div class="t" style="left:42px;top:711.0px;width:20px;text-align:center;font-size:16.5px">A</div>
<div class="t" style="left:71px;top:127.0px;width:20px;text-align:center;font-size:16.5px">B</div>
<div class="t" style="left:71px;top:711.0px;width:20px;text-align:center;font-size:16.5px">B</div>
<div class="t" style="left:100px;top:127.0px;width:20px;text-align:center;font-size:16.5px">C</div>
<div class="t" style="left:100px;top:711.0px;width:20px;text-align:center;font-size:16.5px">C</div>
<div class="t" style="left:129px;top:127.0px;width:20px;text-align:center;font-size:16.5px">D</div>
<div class="t" style="left:129px;top:711.0px;width:20px;text-align:center;font-size:16.5px">D</div>
<div class="t" style="left:158px;top:127.0px;width:20px;text-align:center;font-size:16.5px">E</div>
<div class="t" style="left:158px;top:711.0px;width:20px;text-align:center;font-size:16.5px">E</div>
<div class="t" style="left:187px;top:127.0px;width:20px;text-align:center;font-size:16.5px">F</div>
<div class="t" style="left:187px;top:711.0px;width:20px;text-align:center;font-size:16.5px">F</div>
<div class="t" style="left:216px;top:127.0px;width:20px;text-align:center;font-size:16.5px">G</div>
<div class="t" style="left:216px;top:711.0px;width:20px;text-align:center;font-size:16.5px">G</div>
<div class="t" style="left:245px;top:127.0px;width:20px;text-align:center;font-size:16.5px">H</div>
<div class="t" style="left:245px;top:711.0px;width:20px;text-align:center;font-size:16.5px">H</div>
<div class="t" style="left:274px;top:127.0px;width:20px;text-align:center;font-size:16.5px">J</div>
<div class="t" style="left:274px;top:711.0px;width:20px;text-align:center;font-size:16.5px">J</div>
<div class="t" style="left:303px;top:127.0px;width:20px;text-align:center;font-size:16.5px">K</div>
<div class="t" style="left:303px;top:711.0px;width:20px;text-align:center;font-size:16.5px">K</div>
<div class="t" style="left:332px;top:127.0px;width:20px;text-align:center;font-size:16.5px">L</div>
<div class="t" style="left:332px;top:711.0px;width:20px;text-align:center;font-size:16.5px">L</div>
<div class="t" style="left:361px;top:127.0px;width:20px;text-align:center;font-size:16.5px">M</div>
<div class="t" style="left:361px;top:711.0px;width:20px;text-align:center;font-size:16.5px">M</div>
<div class="t" style="left:390px;top:127.0px;width:20px;text-align:center;font-size:16.5px">N</div>
<div class="t" style="left:390px;top:711.0px;width:20px;text-align:center;font-size:16.5px">N</div>
<div class="t" style="left:419px;top:127.0px;width:20px;text-align:center;font-size:16.5px">O</div>
<div class="t" style="left:419px;top:711.0px;width:20px;text-align:center;font-size:16.5px">O</div>
<div class="t" style="left:448px;top:127.0px;width:20px;text-align:center;font-size:16.5px">P</div>
<div class="t" style="left:448px;top:711.0px;width:20px;text-align:center;font-size:16.5px">P</div>
<div class="t" style="left:477px;top:127.0px;width:20px;text-align:center;font-size:16.5px">Q</div>
<div class="t" style="left:477px;top:711.0px;width:20px;text-align:center;font-size:16.5px">Q</div>
<div class="t" style="left:506px;top:127.0px;width:20px;text-align:center;font-size:16.5px">R</div>
<div class="t" style="left:506px;top:711.0px;width:20px;text-align:center;font-size:16.5px">R</div>
<div class="t" style="left:535px;top:127.0px;width:20px;text-align:center;font-size:16.5px">S</div>
<div class="t" style="left:535px;top:711.0px;width:20px;text-align:center;font-size:16.5px">S</div>
<div class="t" style="left:564px;top:127.0px;width:20px;text-align:center;font-size:16.5px">T</div>
<div class="t" style="left:564px;top:711.0px;width:20px;text-align:center;font-size:16.5px">T</div>
<div class="t" style="left:3px;top:677.7px;width:40px;text-align:center;font-size:17px">1</div>
<div class="t" style="left:3px;top:648.7px;width:40px;text-align:center;font-size:17px">2</div>
<div class="t" style="left:3px;top:619.7px;width:40px;text-align:center;font-size:17px">3</div>
<div class="t" style="left:3px;top:590.7px;width:40px;text-align:center;font-size:17px">4</div>
<div class="t" style="left:3px;top:561.7px;width:40px;text-align:center;font-size:17px">5</div>
<div class="t" style="left:3px;top:532.7px;width:40px;text-align:center;font-size:17px">6</div>
<div class="t" style="left:3px;top:503.7px;width:40px;text-align:center;font-size:17px">7</div>
<div class="t" style="left:3px;top:474.7px;width:40px;text-align:center;font-size:17px">8</div>
<div class="t" style="left:3px;top:445.7px;width:40px;text-align:center;font-size:17px">9</div>
<div class="t" style="left:3px;top:416.7px;width:40px;text-align:center;font-size:17px">10</div>
<div class="t" style="left:3px;top:387.7px;width:40px;text-align:center;font-size:17px">11</div>
<div class="t" style="left:3px;top:358.7px;width:40px;text-align:center;font-size:17px">12</div>
<div class="t" style="left:3px;top:329.7px;width:40px;text-align:center;font-size:17px">13</div>
<div class="t" style="left:3px;top:300.7px;width:40px;text-align:center;font-size:17px">14</div>
<div class="t" style="left:3px;top:271.7px;width:40px;text-align:center;font-size:17px">15</div>
<div class="t" style="left:3px;top:242.7px;width:40px;text-align:center;font-size:17px">16</div>
<div class="t" style="left:3px;top:213.7px;width:40px;text-align:center;font-size:17px">17</div>
<div class="t" style="left:3px;top:184.7px;width:40px;text-align:center;font-size:17px">18</div>
<div class="t" style="left:3px;top:155.7px;width:40px;text-align:center;font-size:17px">19</div>
<div class="a" style="left:624px;top:122px;width:316px;height:200px;background:#fff;border:1px solid #a0a0a0"></div>
<div class="a" style="left:919px;top:123px;width:20px;height:198px;background:#f0f0f0"></div>
<div class="a" style="left:624px;top:326px;width:316px;height:406px;background:#fff;border:1px solid #a0a0a0"></div>
<div class="a" style="left:919px;top:327px;width:20px;height:404px;background:#f0f0f0"></div>
<div class="a" style="left:625px;top:327px;width:21px;height:404px;background:#f0f0f0"></div>
<div class="a" style="left:919px;top:680px;width:19px;height:30px;background:#cdcdcd"></div>
<svg style="left:0;top:0" width="949" height="762"><defs><radialGradient id="sgb" cx="0.38" cy="0.3" r="0.75"><stop offset="0" stop-color="#888"/><stop offset="0.4" stop-color="#1a1a1a"/><stop offset="1" stop-color="#000"/></radialGradient><radialGradient id="sgw" cx="0.4" cy="0.32" r="0.75"><stop offset="0" stop-color="#fff"/><stop offset="0.45" stop-color="#ececec"/><stop offset="1" stop-color="#7c7c7c"/></radialGradient></defs><line x1="657.5" y1="327" x2="657.5" y2="714" stroke="#808080" stroke-width="1" stroke-dasharray="1 1"/><line x1="658" y1="339.5" x2="668" y2="339.5" stroke="#808080" stroke-width="1" stroke-dasharray="1 1"/><circle cx="676.5" cy="337.7" r="6" fill="url(#sgw)"/><line x1="658" y1="361.5" x2="668" y2="361.5" stroke="#808080" stroke-width="1" stroke-dasharray="1 1"/><circle cx="676.5" cy="359.7" r="6" fill="url(#sgb)"/><line x1="658" y1="383.5" x2="668" y2="383.5" stroke="#808080" stroke-width="1" stroke-dasharray="1 1"/><circle cx="676.5" cy="381.7" r="6" fill="url(#sgw)"/><line x1="658" y1="405.5" x2="668" y2="405.5" stroke="#808080" stroke-width="1" stroke-dasharray="1 1"/><circle cx="676.5" cy="403.7" r="6" fill="url(#sgb)"/><line x1="658" y1="427.5" x2="668" y2="427.5" stroke="#808080" stroke-width="1" stroke-dasharray="1 1"/><circle cx="676.5" cy="425.7" r="6" fill="url(#sgw)"/><line x1="658" y1="449.5" x2="668" y2="449.5" stroke="#808080" stroke-width="1" stroke-dasharray="1 1"/><circle cx="676.5" cy="447.7" r="6" fill="url(#sgb)"/><line x1="658" y1="471.5" x2="668" y2="471.5" stroke="#808080" stroke-width="1" stroke-dasharray="1 1"/><circle cx="676.5" cy="469.7" r="6" fill="url(#sgw)"/><line x1="658" y1="493.5" x2="668" y2="493.5" stroke="#808080" stroke-width="1" stroke-dasharray="1 1"/><circle cx="676.5" cy="491.7" r="6" fill="url(#sgb)"/><line x1="658" y1="515.5" x2="668" y2="515.5" stroke="#808080" stroke-width="1" stroke-dasharray="1 1"/><circle cx="676.5" cy="513.7" r="6" fill="url(#sgw)"/><line x1="658" y1="537.5" x2="668" y2="537.5" stroke="#808080" stroke-width="1" stroke-dasharray="1 1"/><circle cx="676.5" cy="535.7" r="6" fill="url(#sgb)"/><line x1="658" y1="559.5" x2="668" y2="559.5" stroke="#808080" stroke-width="1" stroke-dasharray="1 1"/><circle cx="676.5" cy="557.7" r="6" fill="url(#sgw)"/><line x1="658" y1="581.5" x2="668" y2="581.5" stroke="#808080" stroke-width="1" stroke-dasharray="1 1"/><circle cx="676.5" cy="579.7" r="6" fill="url(#sgb)"/><line x1="658" y1="603.5" x2="668" y2="603.5" stroke="#808080" stroke-width="1" stroke-dasharray="1 1"/><circle cx="676.5" cy="601.7" r="6" fill="url(#sgw)"/><line x1="658" y1="625.5" x2="668" y2="625.5" stroke="#808080" stroke-width="1" stroke-dasharray="1 1"/><circle cx="676.5" cy="623.7" r="6" fill="url(#sgb)"/><line x1="658" y1="647.5" x2="668" y2="647.5" stroke="#808080" stroke-width="1" stroke-dasharray="1 1"/><circle cx="676.5" cy="645.7" r="6" fill="url(#sgw)"/><line x1="658" y1="669.5" x2="668" y2="669.5" stroke="#808080" stroke-width="1" stroke-dasharray="1 1"/><circle cx="676.5" cy="667.7" r="6" fill="url(#sgb)"/><line x1="658" y1="691.5" x2="668" y2="691.5" stroke="#808080" stroke-width="1" stroke-dasharray="1 1"/><circle cx="676.5" cy="689.7" r="6" fill="url(#sgw)"/><line x1="658" y1="713.5" x2="668" y2="713.5" stroke="#808080" stroke-width="1" stroke-dasharray="1 1"/><circle cx="676.5" cy="711.7" r="6" fill="url(#sgb)"/><path d="M672.7 713 L676.5 708.7 L680.3 713 Z" fill="#e81010"/></svg>
<div class="t" style="left:689.5px;top:331.85px;font-size:14px;color:#000;transform-origin:0 0;transform:scaleX(0.96)">H2</div>
<div class="t" style="left:689.5px;top:353.85px;font-size:14px;color:#000;transform-origin:0 0;transform:scaleX(0.96)">H5</div>
<div class="t" style="left:689.5px;top:375.85px;font-size:14px;color:#000;transform-origin:0 0;transform:scaleX(0.96)">G12</div>
<div class="t" style="left:689.5px;top:397.85px;font-size:14px;color:#000;transform-origin:0 0;transform:scaleX(0.96)">G13</div>
<div class="t" style="left:689.5px;top:419.85px;font-size:14px;color:#000;transform-origin:0 0;transform:scaleX(0.96)">J10</div>
<div class="t" style="left:689.5px;top:441.85px;font-size:14px;color:#000;transform-origin:0 0;transform:scaleX(0.96)">K8</div>
<div class="t" style="left:689.5px;top:463.85px;font-size:14px;color:#000;transform-origin:0 0;transform:scaleX(0.96)">L7</div>
<div class="t" style="left:689.5px;top:485.85px;font-size:14px;color:#000;transform-origin:0 0;transform:scaleX(0.96)">K10</div>
<div class="t" style="left:689.5px;top:507.85px;font-size:14px;color:#000;transform-origin:0 0;transform:scaleX(0.96)">F12</div>
<div class="t" style="left:689.5px;top:529.85px;font-size:14px;color:#000;transform-origin:0 0;transform:scaleX(0.96)">D11</div>
<div class="t" style="left:689.5px;top:551.85px;font-size:14px;color:#000;transform-origin:0 0;transform:scaleX(0.96)">E10</div>
<div class="t" style="left:689.5px;top:573.85px;font-size:14px;color:#000;transform-origin:0 0;transform:scaleX(0.96)">A12</div>
<div class="t" style="left:689.5px;top:595.85px;font-size:14px;color:#000;transform-origin:0 0;transform:scaleX(0.96)">B16</div>
<div class="t" style="left:689.5px;top:617.85px;font-size:14px;color:#000;transform-origin:0 0;transform:scaleX(0.96)">A14</div>
<div class="t" style="left:689.5px;top:639.85px;font-size:14px;color:#000;transform-origin:0 0;transform:scaleX(0.96)">A15</div>
<div class="t" style="left:689.5px;top:661.85px;font-size:14px;color:#000;transform-origin:0 0;transform:scaleX(0.96)">G10</div>
<div class="t" style="left:689.5px;top:683.85px;font-size:14px;color:#000;transform-origin:0 0;transform:scaleX(0.96)">H11</div>
<div class="a" style="left:687px;top:701px;width:22px;height:22px;background:#3399ff;border:1px dotted #000"></div>
<div class="t" style="left:690.3px;top:706.05px;font-size:14px;color:#fff;transform-origin:0 0;transform:scaleX(0.9)">G8</div>
<svg style="left:0;top:0" width="949" height="762"><path d="M924.8 135.7 L928.5 132 L932.2 135.7" fill="none" stroke="#c2c2c2" stroke-width="2.3"/><path d="M924.8 308.3 L928.5 312 L932.2 308.3" fill="none" stroke="#c2c2c2" stroke-width="2.3"/><path d="M924.8 339.7 L928.5 336 L932.2 339.7" fill="none" stroke="#5a5a5a" stroke-width="2.3"/><path d="M924.8 718.3 L928.5 722 L932.2 718.3" fill="none" stroke="#5a5a5a" stroke-width="2.3"/><path d="M631.8 718.8 L635.5 722.5 L639.2 718.8" fill="none" stroke="#5a5a5a" stroke-width="2.3"/></svg>
<div class="a" style="left:935px;top:743px;width:3px;height:3px;background:#acacac"></div>
<div class="a" style="left:931px;top:747px;width:3px;height:3px;background:#acacac"></div>
<div class="a" style="left:935px;top:747px;width:3px;height:3px;background:#acacac"></div>
<div class="a" style="left:927px;top:751px;width:3px;height:3px;background:#acacac"></div>
<div class="a" style="left:931px;top:751px;width:3px;height:3px;background:#acacac"></div>
<div class="a" style="left:935px;top:751px;width:3px;height:3px;background:#acacac"></div>
<div class="a" style="left:9px;top:734px;width:486px;height:22px;border:1px solid #ababab"></div>
<div class="a" style="left:497px;top:734px;width:167px;height:22px;border:1px solid #ababab"></div>
<div class="a" style="left:666px;top:734px;width:149px;height:22px;border:1px solid #ababab"></div>
<div class="a" style="left:817px;top:734px;width:123px;height:22px;border:1px solid #ababab"></div>
<div class="t" style="left:14.5px;top:740.30px;font-size:15px;color:#000;transform-origin:0 0;transform:scaleX(0.936)">For Help, press F1</div>
<div class="t" style="left:503px;top:740.30px;font-size:15px;color:#000;transform-origin:0 0;transform:scaleX(0.971)">Dead: Black 3 White 8</div>
<div class="t" style="left:672px;top:740.30px;font-size:15px;color:#000;transform-origin:0 0;transform:scaleX(0.938)">Last Move: 219 (G8)</div>
<div class="t" style="left:823px;top:740.30px;font-size:15px;color:#000;transform-origin:0 0;transform:scaleX(0.98)">Next:White</div>
<div class="a" style="left:87px;top:17px;width:561px;height:701px;background:#f0c868;border:1px solid #b8984e;box-shadow:0 0 7px rgba(0,0,0,0.13)"></div>
<div class="a" style="left:95px;top:54px;width:545px;height:656px;background:#f0f0f0;border:1px solid #c9a658"></div>
<div class="t" style="left:292px;top:26.92px;font-size:19px;color:#333;">Game Information</div>
<div class="a" style="left:599px;top:18px;width:41px;height:26px;background:#c75050"></div>
<svg style="left:614px;top:26px" width="11" height="9"><path d="M0.5 0.5 L10.5 8.5 M10.5 0.5 L0.5 8.5" stroke="#fff" stroke-width="2"/></svg>
<div class="a" style="left:108px;top:77px;width:518px;height:206px;border:1px solid #dcdcdc"></div>
<div class="a" style="left:114px;top:71px;width:58px;height:10px;background:#f0f0f0"></div>
<div class="a" style="left:108px;top:295px;width:518px;height:118px;border:1px solid #dcdcdc"></div>
<div class="a" style="left:114px;top:289px;width:108px;height:10px;background:#f0f0f0"></div>
<div class="a" style="left:108px;top:427px;width:518px;height:226px;border:1px solid #dcdcdc"></div>
<div class="a" style="left:114px;top:421px;width:44px;height:10px;background:#f0f0f0"></div>
<div class="t" style="left:116.8px;top:71.00px;font-size:13px;color:#000;transform-origin:0 0;transform:scaleX(0.9697)">Common</div>
<div class="t" style="left:116.8px;top:289.00px;font-size:13px;color:#000;transform-origin:0 0;transform:scaleX(0.9901)">When and Where</div>
<div class="t" style="left:116.8px;top:421.00px;font-size:13px;color:#000;transform-origin:0 0;transform:scaleX(1.0062)">Other</div>
<div class="t" style="left:120.8px;top:93.00px;font-size:13px;color:#000;transform-origin:0 0;transform:scaleX(0.9525)">Game Name</div>
<div class="t" style="left:120.8px;top:125.00px;font-size:13px;color:#000;transform-origin:0 0;transform:scaleX(0.9796)">White Player</div>
<div class="t" style="left:120.8px;top:157.00px;font-size:13px;color:#000;transform-origin:0 0;transform:scaleX(0.9792)">White Rank</div>
<div class="t" style="left:120.8px;top:187.00px;font-size:13px;color:#000;transform-origin:0 0;transform:scaleX(1.0263)">White Team</div>
<div class="t" style="left:120.8px;top:221.00px;font-size:13px;color:#000;transform-origin:0 0;transform:scaleX(0.9527)">Komi</div>
<div class="t" style="left:120.8px;top:251.00px;font-size:13px;color:#000;transform-origin:0 0;transform:scaleX(0.9675)">Result</div>
<div class="t" style="left:370.8px;top:123.00px;font-size:13px;color:#000;transform-origin:0 0;transform:scaleX(0.9433)">Black Player</div>
<div class="t" style="left:370.8px;top:155.00px;font-size:13px;color:#000;transform-origin:0 0;transform:scaleX(0.9453)">Black Rank</div>
<div class="t" style="left:370.8px;top:187.00px;font-size:13px;color:#000;transform-origin:0 0;transform:scaleX(0.9806)">Black Team</div>
<div class="t" style="left:370.8px;top:223.00px;font-size:13px;color:#000;transform-origin:0 0;transform:scaleX(0.9545)">Handicap</div>
<div class="t" style="left:120.8px;top:315.00px;font-size:13px;color:#000;transform-origin:0 0;transform:scaleX(0.9673)">Date</div>
<div class="t" style="left:120.8px;top:347.00px;font-size:13px;color:#000;transform-origin:0 0;transform:scaleX(1.0282)">Time</div>
<div class="t" style="left:120.8px;top:381.00px;font-size:13px;color:#000;transform-origin:0 0;transform:scaleX(0.9520)">Event</div>
<div class="t" style="left:370.8px;top:315.50px;font-size:13px;color:#000;transform-origin:0 0;transform:scaleX(0.9446)">Place</div>
<div class="t" style="left:370.8px;top:347.50px;font-size:13px;color:#000;transform-origin:0 0;transform:scaleX(0.9556)">Round</div>
<div class="t" style="left:120.8px;top:443.00px;font-size:13px;color:#000;transform-origin:0 0;transform:scaleX(0.9745)">User</div>
<div class="t" style="left:120.8px;top:469.00px;font-size:13px;color:#000;transform-origin:0 0;transform:scaleX(0.9830)">Source</div>
<div class="t" style="left:120.8px;top:503.00px;font-size:13px;color:#000;transform-origin:0 0;transform:scaleX(0.9759)">Game Comment</div>
<div class="t" style="left:120.8px;top:555.00px;font-size:13px;color:#000;transform-origin:0 0;transform:scaleX(0.9910)">Copyright</div>
<div class="t" style="left:120.8px;top:611.00px;font-size:13px;color:#000;transform-origin:0 0;transform:scaleX(0.9904)">Annotation</div>
<div class="a" style="left:231px;top:87px;width:380px;height:24px;background:#fff"></div>
<div class="a" style="left:231px;top:119px;width:126px;height:24px;background:#fff"></div>
<div class="t" style="left:234.5px;top:124.00px;font-size:13px;color:#000;transform-origin:0 0;transform:scaleX(0.92)">Yu Bin</div>
<div class="a" style="left:231px;top:151px;width:126px;height:24px;background:#fff"></div>
<div class="t" style="left:234.5px;top:156.00px;font-size:13px;color:#000;transform-origin:0 0;transform:scaleX(0.93)">9p</div>
<div class="a" style="left:231px;top:183px;width:126px;height:24px;background:#fff"></div>
<div class="a" style="left:231px;top:215px;width:126px;height:24px;background:#fff"></div>
<div class="t" style="left:234.5px;top:220.00px;font-size:13px;color:#000;transform-origin:0 0;transform:scaleX(1.0)">3.8</div>
<div class="a" style="left:231px;top:247px;width:126px;height:24px;background:#fff"></div>
<div class="t" style="left:234.5px;top:252.00px;font-size:13px;color:#000;transform-origin:0 0;transform:scaleX(0.95)">B+1.75</div>
<div class="a" style="left:485px;top:119px;width:126px;height:24px;background:#fff"></div>
<div class="t" style="left:488.5px;top:124.00px;font-size:13px;color:#000;transform-origin:0 0;transform:scaleX(0.94)">Xia Chenkun</div>
<div class="a" style="left:485px;top:151px;width:126px;height:24px;background:#fff"></div>
<div class="t" style="left:488.5px;top:156.00px;font-size:13px;color:#000;transform-origin:0 0;transform:scaleX(0.93)">3p</div>
<div class="a" style="left:485px;top:183px;width:126px;height:24px;background:#fff"></div>
<div class="a" style="left:485px;top:217px;width:126px;height:24px;background:#fff"></div>
<div class="a" style="left:231px;top:309px;width:126px;height:24px;background:#fff"></div>
<div class="t" style="left:234.5px;top:314.00px;font-size:13px;color:#000;transform-origin:0 0;transform:scaleX(1.0)">2014-04-02</div>
<div class="a" style="left:231px;top:343px;width:126px;height:24px;background:#fff"></div>
<div class="a" style="left:231px;top:375px;width:380px;height:24px;background:#fff"></div>
<div class="t" style="left:234.5px;top:380.00px;font-size:13px;color:#000;transform-origin:0 0;transform:scaleX(0.986)">27th Chinese Mingren, preliminary</div>
<div class="a" style="left:485px;top:309px;width:126px;height:24px;background:#fff"></div>
<div class="a" style="left:485px;top:343px;width:126px;height:24px;background:#fff"></div>
<div class="a" style="left:231px;top:435px;width:380px;height:24px;background:#fff"></div>
<div class="a" style="left:231px;top:467px;width:380px;height:24px;background:#fff"></div>
<div class="t" style="left:234.5px;top:472.00px;font-size:13px;color:#000;transform-origin:0 0;transform:scaleX(0.94)">Go4Go.net</div>
<div class="a" style="left:231px;top:497px;width:380px;height:48px;background:#fff"></div>
<div class="a" style="left:231px;top:551px;width:380px;height:48px;background:#fff"></div>
<div class="a" style="left:231px;top:605px;width:380px;height:34px;background:#fff"></div>
<svg style="left:0;top:0" width="949" height="762"><ellipse cx="252" cy="245.5" rx="46" ry="43.5" fill="none" stroke="#000" stroke-width="10"/></svg>
<div class="a" style="left:231px;top:87px;width:380px;height:24px;border:1px solid #569de5"></div>
<div class="a" style="left:231px;top:119px;width:126px;height:24px;border:1px solid #abadb3"></div>
<div class="a" style="left:231px;top:151px;width:126px;height:24px;border:1px solid #abadb3"></div>
<div class="a" style="left:231px;top:183px;width:126px;height:24px;border:1px solid #abadb3"></div>
<div class="a" style="left:231px;top:215px;width:126px;height:24px;border:1px solid #abadb3"></div>
<div class="a" style="left:231px;top:247px;width:126px;height:24px;border:1px solid #abadb3"></div>
<div class="a" style="left:485px;top:119px;width:126px;height:24px;border:1px solid #abadb3"></div>
<div class="a" style="left:485px;top:151px;width:126px;height:24px;border:1px solid #abadb3"></div>
<div class="a" style="left:485px;top:183px;width:126px;height:24px;border:1px solid #abadb3"></div>
<div class="a" style="left:485px;top:217px;width:126px;height:24px;border:1px solid #abadb3"></div>
<div class="a" style="left:231px;top:309px;width:126px;height:24px;border:1px solid #abadb3"></div>
<div class="a" style="left:231px;top:343px;width:126px;height:24px;border:1px solid #abadb3"></div>
<div class="a" style="left:231px;top:375px;width:380px;height:24px;border:1px solid #abadb3"></div>
<div class="a" style="left:485px;top:309px;width:126px;height:24px;border:1px solid #abadb3"></div>
<div class="a" style="left:485px;top:343px;width:126px;height:24px;border:1px solid #abadb3"></div>
<div class="a" style="left:231px;top:435px;width:380px;height:24px;border:1px solid #abadb3"></div>
<div class="a" style="left:231px;top:467px;width:380px;height:24px;border:1px solid #abadb3"></div>
<div class="a" style="left:231px;top:497px;width:380px;height:48px;border:1px solid #abadb3"></div>
<div class="a" style="left:231px;top:551px;width:380px;height:48px;border:1px solid #abadb3"></div>
<div class="a" style="left:231px;top:605px;width:380px;height:34px;border:1px solid #abadb3"></div>
<div class="a" style="left:108px;top:282px;width:518px;height:1px;background:#dcdcdc"></div>
<div class="a" style="left:440px;top:668px;width:86px;height:26px;background:linear-gradient(#f0f0f0,#e5e5e5);border:1px solid #acacac"></div>
<div class="a" style="left:540px;top:668px;width:86px;height:26px;background:linear-gradient(#f0f0f0,#e5e5e5);border:1px solid #acacac"></div>
<div class="t" style="left:440px;top:674px;width:86px;text-align:center;font-size:13px">OK</div>
<div class="t" style="left:540px;top:674px;width:86px;text-align:center;font-size:13px">Cancel</div>
</body></html>
